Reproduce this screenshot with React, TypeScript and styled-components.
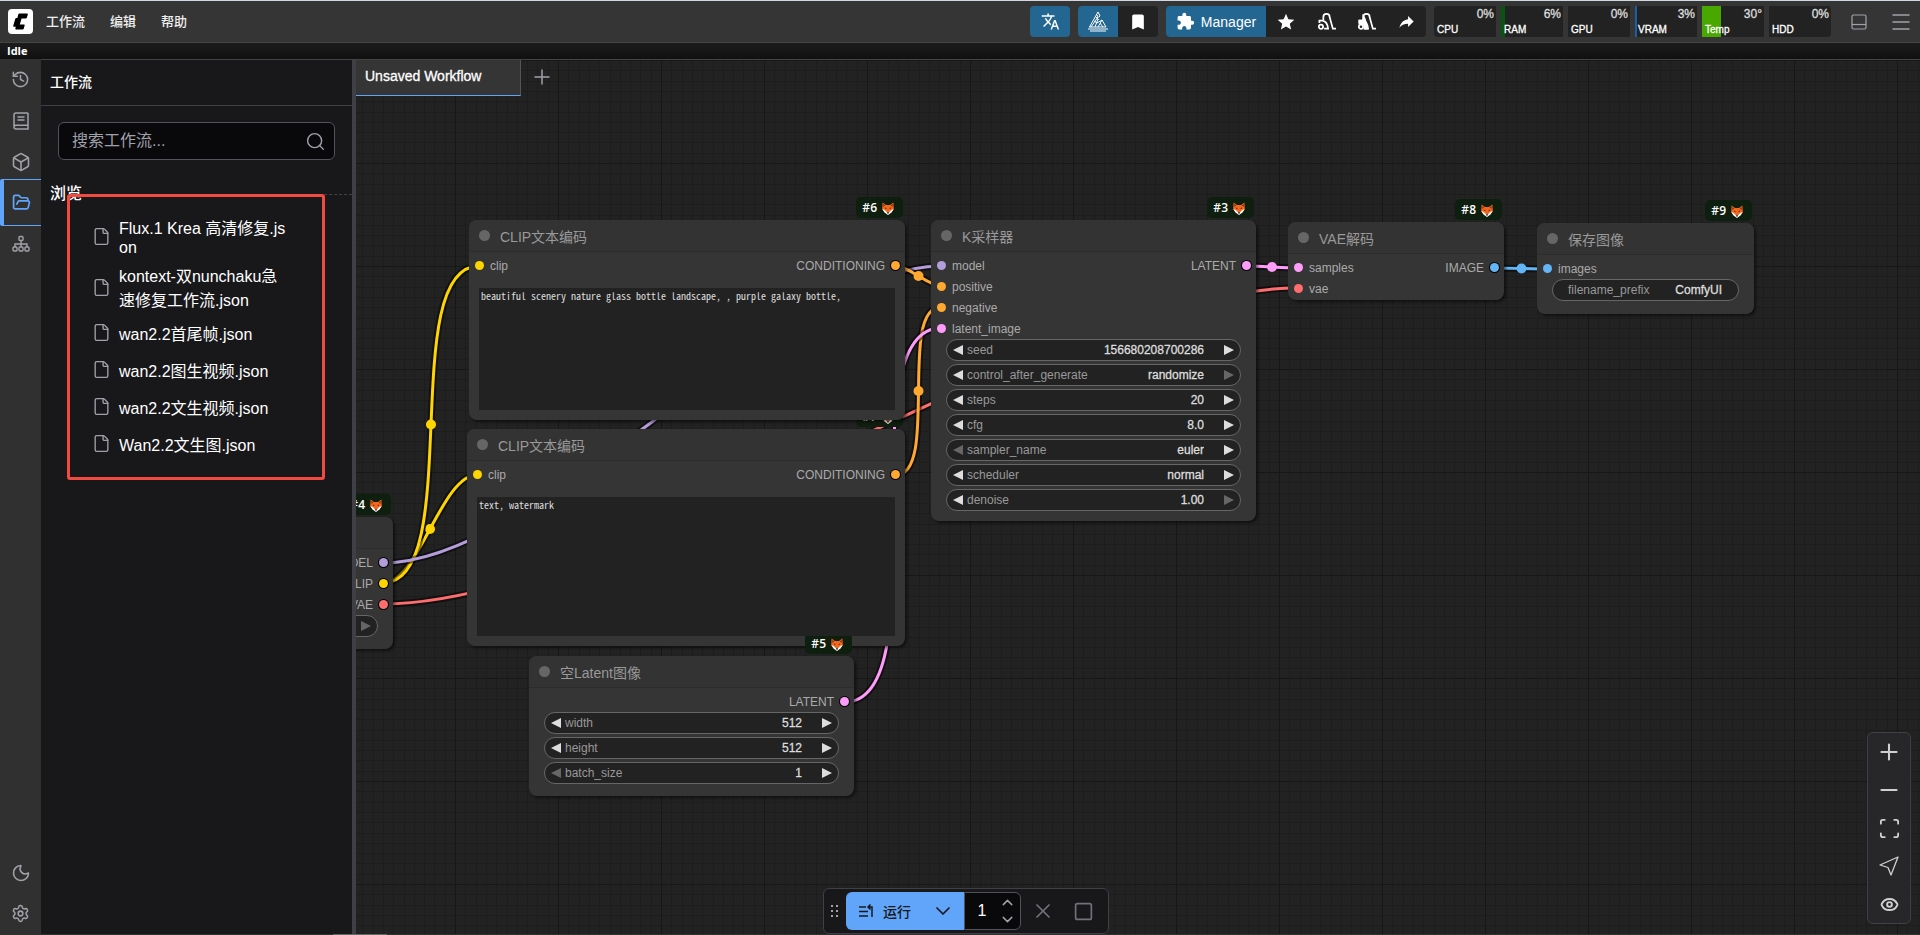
import React from "react";
import styled, { createGlobalStyle, css } from "styled-components";
import { Box, FolderOpen, Moon, Settings, History, Search, File, Plus, Minus, Eye, Scan, ChevronDown, ChevronUp, X, Square, Menu } from "lucide-react";
import { MdTranslate, MdBookmark, MdExtension, MdStar } from "react-icons/md";

const sans = `"Liberation Sans", "Noto Sans CJK SC", sans-serif`;

const GlobalStyle = createGlobalStyle`
  * { box-sizing: border-box; }
  body { margin: 0; background: #202020; color: #fff; font-family: ${sans}; overflow: hidden; }
  button, input, select, textarea { font: inherit; color: inherit; margin: 0; padding: 0; border: 0; background: none; outline: none; }
  svg { display: block; flex: none; }
`;

/* ---------- shell ---------- */

const Page = styled.div`
  display: flex;
  flex-direction: column;
  height: 100vh;
`;

const TopBar = styled.header`
  flex: none;
  display: flex;
  align-items: center;
  height: 43px;
  padding: 0 10px 0 8px;
  background: #353535;
  border-top: 1px solid #cfd8e3;
  border-bottom: 1px solid #444;
`;

const MenuBar = styled.nav`
  display: flex;
  gap: 25px;
  margin: 0 auto 0 13px;
`;

const MenuButton = styled.button`
  font-size: 13px;
  font-weight: 500;
  line-height: 20px;
  color: #eee;
`;

const StatusBar = styled.div`
  flex: none;
  height: 17px;
  padding-left: 7px;
  background: linear-gradient(#1c1c1c, #101010);
  border-bottom: 1px solid #444;
  font: bold 11px/16px "Open Sans", sans-serif;
`;

const Main = styled.div`
  flex: 1;
  display: flex;
  min-height: 0;
`;

const BottomLine = styled.div`
  flex: none;
  height: 1px;
  padding-left: 333px;
  background: #303030;
  &::after { content: ""; display: block; width: 54px; height: 1px; background: #666; }
`;

/* ---------- top bar tools ---------- */

const Tools = styled.div`
  display: flex;
  align-items: center;
  gap: 8px;
`;

const ToolGroup = styled.div`
  display: flex;
  height: 31px;
  border-radius: 4px;
  overflow: hidden;
  background: #222;
`;

const ToolButton = styled.button<{ $active?: boolean; $wide?: boolean }>`
  display: flex;
  align-items: center;
  justify-content: center;
  gap: 6px;
  width: ${(p) => (p.$wide ? 100 : 40)}px;
  background: ${(p) => (p.$active ? "#236692" : "transparent")};
  font-size: 14px;
`;

const Monitors = styled.div`
  display: flex;
  gap: 5px;
  border-radius: 4px;
  overflow: hidden;
`;

const Monitor = styled.div<{ $fill: string; $pct: number }>`
  display: flex;
  flex-direction: column;
  justify-content: space-between;
  width: 62px;
  height: 31px;
  padding: 2px 2px 1px 3px;
  background: linear-gradient(90deg, ${(p) => `${p.$fill} ${p.$pct}%, #222 ${p.$pct}%`});
  font-size: 12px;
  line-height: 13px;
  color: #ddd;
`;

const MonitorValue = styled.span`
  align-self: flex-end;
  -webkit-text-stroke: 0.3px;
`;

const MonitorName = styled.span`
  font-size: 10px;
  color: #fff;
  -webkit-text-stroke: 0.3px;
`;

const PlainButton = styled.button<{ $gap?: number }>`
  display: flex;
  align-items: center;
  justify-content: center;
  width: 18px;
  height: 18px;
  margin-left: ${(p) => p.$gap}px;
  color: #a1a1aa;
`;

/* ---------- icon rail ---------- */

const Rail = styled.nav`
  flex: none;
  display: flex;
  flex-direction: column;
  width: 41px;
  margin-top: -1px;
  background: #303030;
  color: #a1a1aa;
`;

const RailButton = styled.button<{ $active?: boolean; $push?: boolean }>`
  display: flex;
  align-items: center;
  justify-content: center;
  height: 41px;
  ${(p) => p.$push && css`margin-top: auto;`}
  ${(p) => p.$active && css`
    height: 47px;
    margin: -3px 0;
    padding-right: 3px;
    color: #60a5fa;
    border-top: 1px solid #60a5fa;
    border-bottom: 1px solid #60a5fa;
    border-left: 4px solid #60a5fa;
    border-top-left-radius: 2px;
    border-bottom-left-radius: 2px;
  `}
`;

/* ---------- workflow panel ---------- */

const Panel = styled.aside`
  position: relative;
  flex: none;
  display: flex;
  flex-direction: column;
  width: 315px;
  background: #18181b;
  border-right: 4px solid #3f3f46;
`;

const PanelHeader = styled.h2`
  margin: 0;
  height: 46px;
  padding-left: 9px;
  border-bottom: 1px solid #3f3f46;
  font-size: 14px;
  font-weight: 500;
  line-height: 44px;
`;

const SearchBox = styled.label`
  display: flex;
  align-items: center;
  height: 38px;
  margin: 16px 17px 0;
  padding: 0 8px 0 13px;
  border: 1px solid #52525b;
  border-radius: 6px;
  background: #09090b;
  color: #a1a1aa;
`;

const SearchInput = styled.input`
  flex: 1;
  min-width: 0;
  font-size: 16px;
  line-height: 24px;
  &::placeholder { color: #a1a1aa; opacity: 1; }
`;

const SectionTitle = styled.h3`
  display: flex;
  align-items: center;
  gap: 9px;
  margin: 22px 0 0;
  padding-left: 9px;
  font-size: 16px;
  font-weight: 500;
  line-height: 24px;
  &::after { content: ""; flex: 1; border-top: 1px dashed #3f3f46; }
`;

const FileList = styled.ul`
  display: flex;
  flex-direction: column;
  gap: 2px;
  margin: 0;
  padding: 7px 60px 0 51px;
  list-style: none;
`;

const FileRow = styled.li`
  display: flex;
  align-items: center;
  gap: 8px;
  min-height: 35px;
  padding: 2px 0;
  color: #a1a1aa;
`;

const FileName = styled.span`
  flex: 1;
  color: #fff;
  font-size: 16px;
  word-break: break-all;
`;

const Highlight = styled.div`
  position: absolute;
  top: 134px;
  left: 26px;
  width: 258px;
  height: 286px;
  border: 3px solid #f04a41;
  border-radius: 3px;
  pointer-events: none;
`;

/* ---------- canvas ---------- */

const Canvas = styled.main`
  position: relative;
  flex: 1;
  min-width: 0;
  overflow: hidden;
  background: #222;
`;

const PAN_X = 356;
const PAN_Y = 60;

const World = styled.div`
  position: absolute;
  left: -${PAN_X}px;
  top: -${PAN_Y}px;
`;

const Drawing = styled.svg`
  position: absolute;
  left: 0;
  top: 0;
  width: 100%;
  height: 100%;
`;

const Links = styled.svg`
  position: absolute;
  left: 0;
  top: 0;
  overflow: visible;
`;

const Tabs = styled.div`
  position: relative;
  display: flex;
  align-items: center;
  width: max-content;
`;

const Tab = styled.button`
  width: 165px;
  height: 36px;
  padding: 0 0 4px 9px;
  background: #353535;
  border-right: 1px solid #555;
  border-bottom: 1px solid #60a5fa;
  font-size: 14px;
  text-align: left;
  -webkit-text-stroke: 0.3px;
`;

const NewTab = styled.button`
  padding: 0 9px 2px;
  color: #a1a1aa;
`;

const NodeBox = styled.section<{ $x: number; $y: number; $w: number; $h: number }>`
  position: absolute;
  left: ${(p) => p.$x}px;
  top: ${(p) => p.$y}px;
  width: ${(p) => p.$w}px;
  height: ${(p) => p.$h}px;
  display: flex;
  flex-direction: column;
  background: #353535;
  border-radius: 8px;
  box-shadow: 2px 2px 3px rgba(0, 0, 0, 0.5);
  color: #aaa;
  font-size: 12px;
`;

const NodeTitle = styled.h4`
  flex: none;
  display: flex;
  align-items: center;
  gap: 10px;
  height: 32px;
  margin: 0;
  padding-left: 10px;
  border-bottom: 1px solid #2c2c2c;
  border-radius: 8px 8px 0 0;
  background: #333;
  color: #999;
  font-size: 14px;
  font-weight: 400;
  &::before { content: ""; width: 11px; height: 11px; border-radius: 50%; background: #666; }
`;

const Badge = styled.div`
  position: absolute;
  right: 2px;
  top: -23px;
  display: flex;
  align-items: center;
  gap: 5px;
  height: 21px;
  padding: 1px 9px 0 6px;
  border-radius: 5px;
  background: #0f1f0f;
  color: #fff;
  font: 600 12px/20px "Open Sans", sans-serif;
`;

const Slots = styled.div`
  flex: none;
  display: flex;
  justify-content: space-between;
  padding: 3px 5px 0 6px;
`;

const SlotColumn = styled.div`
  display: flex;
  flex-direction: column;
`;

const Slot = styled.div<{ $color: string; $out?: boolean }>`
  display: flex;
  flex-direction: ${(p) => (p.$out ? "row-reverse" : "row")};
  align-items: center;
  gap: 6px;
  height: 21px;
  &::before {
    content: "";
    width: 9px;
    height: 9px;
    border-radius: 50%;
    background: ${(p) => p.$color};
    box-shadow: ${(p) => (p.$out ? "0 0 0 1px #000" : "none")};
  }
`;

const Prompt = styled.textarea`
  position: relative;
  z-index: 1;
  flex: 1;
  margin: 12px 10px 10px;
  padding: 2px;
  resize: none;
  background: #222;
  color: #ddd;
  font: 10px/12px "Noto Sans Mono CJK SC", "Liberation Mono", monospace;
`;

const Widgets = styled.div`
  display: flex;
  flex-direction: column;
  gap: 3px;
  padding: 0 15px;
`;

const WidgetRow = styled.div<{ $text?: boolean }>`
  display: flex;
  align-items: center;
  height: 22px;
  padding: ${(p) => (p.$text ? "0 16px 0 15px" : "0 6px")};
  border: 1px solid #666;
  border-radius: 11px;
  background: #222;
  color: #999;
`;

const WidgetLabel = styled.label`
  flex: none;
  margin-left: 4px;
  ${WidgetRow} > &:first-child { margin-left: 0; }
`;

const valueStyle = css`
  flex: 1;
  min-width: 0;
  width: 0;
  color: #ddd;
  -webkit-text-stroke: 0.3px;
`;

const ValueInput = styled.input`
  ${valueStyle}
  text-align: right;
`;

const ValueSelect = styled.select`
  ${valueStyle}
  appearance: none;
  text-align-last: right;
`;

const Step = styled.button<{ $right?: boolean; $off?: boolean }>`
  width: 10px;
  height: 10px;
  margin-left: ${(p) => (p.$right ? 20 : 0)}px;
  background: ${(p) => (p.$off ? "#666" : "#ddd")};
  clip-path: ${(p) => (p.$right ? "polygon(0 0, 100% 50%, 0 100%)" : "polygon(100% 0, 0 50%, 100% 100%)")};
`;

/* ---------- floating bars ---------- */

const RunBar = styled.div`
  position: absolute;
  left: 467px;
  bottom: 0;
  display: flex;
  align-items: center;
  height: 46px;
  padding: 0 15px 0 7px;
  background: #18181b;
  border: 1px solid #3f3f46;
  border-radius: 6px;
  color: #71717a;
`;

const RunButton = styled.button`
  display: flex;
  align-items: center;
  gap: 9px;
  width: 79px;
  height: 38px;
  margin-left: 7px;
  padding-left: 12px;
  border-radius: 6px 0 0 6px;
  background: #60a5fa;
  color: #18181b;
  font-size: 14px;
  font-weight: 500;
`;

const RunMenu = styled.button`
  display: flex;
  align-items: center;
  justify-content: center;
  width: 39px;
  height: 38px;
  padding-right: 3px;
  background: #60a5fa;
  color: #18181b;
`;

const CountBox = styled.div`
  display: flex;
  width: 57px;
  height: 38px;
  border: 1px solid #52525b;
  border-radius: 0 6px 6px 0;
  background: #09090b;
`;

const CountInput = styled.input`
  width: 34px;
  font-size: 16px;
  text-align: center;
  color: #fff;
`;

const CountSteps = styled.div`
  display: flex;
  flex-direction: column;
  justify-content: space-evenly;
  color: #a1a1aa;
`;

const RunAction = styled.button`
  display: flex;
  justify-content: center;
  width: 20px;
  margin-left: 12px;
  & + & { margin-left: 20px; }
`;

const ZoomBar = styled.div`
  position: absolute;
  right: 9px;
  bottom: 10px;
  display: flex;
  flex-direction: column;
  width: 44px;
  background: #27272a;
  border: 1px solid #3f3f46;
  border-radius: 6px;
  color: #d0d0d0;
`;

const ZoomButton = styled.button`
  display: flex;
  align-items: center;
  justify-content: center;
  height: 38px;
`;

/* ---------- drawings ---------- */

const Logo = () => (
  <svg width="25" height="25" viewBox="0 0 25 25">
    <rect width="25" height="25" rx="4" fill="#fff" />
    <path d="M11.3 4.6H19.2Q20 4.6 19.8 5.4L18.8 8.8Q18.6 9.6 17.8 9.6H13.6L11.8 15.4H16Q17 15.4 16.7 16.3L15.7 19.8Q15.4 20.6 14.6 20.6H8Q7.2 20.6 7.3 19.8L7.8 17.8H5.8Q5 17.8 5.2 17L7.3 9.8Q7.5 9.1 8.3 9.1H9.3L10.3 5.4Q10.5 4.6 11.3 4.6Z" fill="#000" />
  </svg>
);

const Sail = () => (
  <svg width="20" height="21" viewBox="0 0 20 21" fill="none" stroke="#fff" strokeWidth="1">
    <path d="M10 1 1.5 16M10 1l2 4-1.5 1.5M9 4l1 2-7 10M10 8l-3 8M6 10l3 2 5-3 4 7H1M14 9l-4 7M8 6l3 3M12 12l3 4M0 18h20M2 20h16" />
  </svg>
);

const Vacuum = ({ solid }: { solid?: boolean }) => (
  <svg width="19" height="19" viewBox="0 0 24 24" fill="none" stroke="#fff" strokeWidth="2.2">
    <path d="M8 10V6.500a4 4 0 0 1 8 0l4 14.500h4" />
    <path d="M3 14v-3h4q6 1 7 10H9" />
    {solid && <path d="M8 5.500q3 4 4.500 15.500H9.500Q11 14 3 14.500V11h5z" fill="#fff" />}
    <circle cx="5" cy="18.500" r="2.700" />
  </svg>
);

const Share = () => (
  <svg width="19" height="19" viewBox="0 0 24 24" fill="#fff">
    <path d="M21 12l-7-7v4C7 10 4 15 3 20c2.500-3.500 6-5.100 11-5.100V19z" />
  </svg>
);

const PanelIcon = () => (
  <svg width="16" height="16" viewBox="0 0 16 16" fill="none" stroke="currentColor" strokeWidth="1.200">
    <rect x="1" y="1" width="14" height="14" rx="1.500" />
    <path d="M1 10.500h14" />
  </svg>
);

const BookIcon = () => (
  <svg width="18" height="18" viewBox="0 0 18 18" fill="none" stroke="currentColor" strokeWidth="1.500">
    <path d="M16 1H4Q2 1 2 3V15Q2 17 4 17H16V1M2.500 14Q3 13.200 4 13.200H16M5.500 5h7M5.500 8h7" />
  </svg>
);

const TreeIcon = () => (
  <svg width="18" height="18" viewBox="0 0 18 18" fill="none" stroke="currentColor" strokeWidth="1.400">
    <rect x="7" y="1.500" width="4" height="4" rx="1" />
    <rect x="1" y="12" width="4" height="4" rx="1" />
    <rect x="7" y="12" width="4" height="4" rx="1" />
    <rect x="13" y="12" width="4" height="4" rx="1" />
    <path d="M9 5.500V12M3 12V9h12v3" />
  </svg>
);

const Fox = () => (
  <svg width="12" height="13" viewBox="0 0 12 13">
    <path d="M.6.6 4 3h4L11.400.6 11.800 7 9 10.500H3L.2 7Z" fill="#f4661b" />
    <path d="M1.300 1.900 3 3.300 1.500 5Z M10.700 1.900 9 3.300 10.500 5Z" fill="#5b2c14" />
    <path d="M.2 7 2.800 8 6 11.400 9.200 8 11.800 7 9.500 10.600 6 12.900 2.500 10.600Z" fill="#fff" />
    <path d="M3 5.300 4.800 6.900 3.300 6.800ZM9 5.300 7.200 6.900 8.700 6.800ZM5 10.700h2L6 12Z" fill="#222" />
  </svg>
);

const Handle = () => (
  <svg width="8" height="14" viewBox="0 0 8 14" fill="#a1a1aa">
    {[1, 6, 11].map((y) => [0, 5].map((x) => <rect key={`${x}-${y}`} x={x} y={y} width="2" height="2" />))}
  </svg>
);

const QueueIcon = () => (
  <svg width="16" height="14" viewBox="0 0 16 14" fill="none" stroke="currentColor" strokeWidth="1.500">
    <path d="M1 3h7M1 7.500h9M1 12h9M14 13V3H10M12.500.5 10 3l2.500 2.500" />
  </svg>
);

const SendIcon = () => (
  <svg width="20" height="20" viewBox="0 0 20 20" fill="none" stroke="currentColor" strokeWidth="1.300" strokeLinejoin="round">
    <path d="M19 1 1 9l8 2.500L12 19Z" />
  </svg>
);

/* ---------- data ---------- */

const YELLOW = "#FFD500", PURPLE = "#B39DDB", RED = "#FF6E6E", ORANGE = "#FFA931", PINK = "#FF9CF9", BLUE = "#64B5F6";

type Port = [label: string, color: string];
type Widget = { name: string; value?: string; kind: "number" | "combo" | "text"; noLeft?: boolean; noRight?: boolean };
type GraphNode = {
  id: number; x: number; y: number; w: number; h: number; title?: string;
  inputs?: Port[]; outputs?: Port[]; widgets?: Widget[]; prompt?: string;
};

const nodes: GraphNode[] = [
  { id: 4, x: 68, y: 517, w: 325, h: 132, outputs: [["MODEL", PURPLE], ["CLIP", YELLOW], ["VAE", RED]], widgets: [{ name: "", kind: "combo", noRight: true }] },
  {
    id: 3, x: 931, y: 220, w: 325, h: 301, title: "K采样器",
    inputs: [["model", PURPLE], ["positive", ORANGE], ["negative", ORANGE], ["latent_image", PINK]],
    outputs: [["LATENT", PINK]],
    widgets: [
      { name: "seed", value: "156680208700286", kind: "number" },
      { name: "control_after_generate", value: "randomize", kind: "combo", noRight: true },
      { name: "steps", value: "20", kind: "number" },
      { name: "cfg", value: "8.0", kind: "number" },
      { name: "sampler_name", value: "euler", kind: "combo", noLeft: true },
      { name: "scheduler", value: "normal", kind: "combo" },
      { name: "denoise", value: "1.00", kind: "number", noRight: true },
    ],
  },
  { id: 8, x: 1288, y: 222, w: 216, h: 78, title: "VAE解码", inputs: [["samples", PINK], ["vae", RED]], outputs: [["IMAGE", BLUE]] },
  { id: 9, x: 1537, y: 223, w: 217, h: 91, title: "保存图像", inputs: [["images", BLUE]], widgets: [{ name: "filename_prefix", value: "ComfyUI", kind: "text" }] },
  { id: 7, x: 467, y: 429, w: 438, h: 217, title: "CLIP文本编码", inputs: [["clip", YELLOW]], outputs: [["CONDITIONING", ORANGE]], prompt: "text, watermark" },
  {
    id: 6, x: 469, y: 220, w: 436, h: 200, title: "CLIP文本编码", inputs: [["clip", YELLOW]], outputs: [["CONDITIONING", ORANGE]],
    prompt: "beautiful scenery nature glass bottle landscape, , purple galaxy bottle,",
  },
  {
    id: 5, x: 529, y: 656, w: 325, h: 140, title: "空Latent图像", outputs: [["LATENT", PINK]],
    widgets: [
      { name: "width", value: "512", kind: "number" },
      { name: "height", value: "512", kind: "number" },
      { name: "batch_size", value: "1", kind: "number", noLeft: true },
    ],
  },
];

const links: [number, number, number, number, string][] = [
  [383, 583, 477, 475, YELLOW],
  [383, 583, 479, 266, YELLOW],
  [383, 563, 941, 266, PURPLE],
  [383, 604, 1298, 288, RED],
  [896, 266, 941, 286, ORANGE],
  [896, 475, 941, 307, ORANGE],
  [845, 702, 941, 328, PINK],
  [1246, 266, 1298, 268, PINK],
  [1495, 268, 1548, 269, BLUE],
];

const files = [
  "Flux.1 Krea 高清修复.json",
  "kontext-双nunchaku急速修复工作流.json",
  "wan2.2首尾帧.json",
  "wan2.2图生视频.json",
  "wan2.2文生视频.json",
  "Wan2.2文生图.json",
];

const monitors: [string, string, number, string][] = [
  ["CPU", "0%", 0, "#222"],
  ["RAM", "6%", 6, "#07560f"],
  ["GPU", "0%", 0, "#222"],
  ["VRAM", "3%", 3, "#1a5fa5"],
  ["Temp", "30°", 30, "#49a800"],
  ["HDD", "0%", 0, "#222"],
];

const gridSteps = [10, 21, 31, 41, 52, 62, 72, 82, 93];

/* ---------- parts ---------- */

const Grid = () => (
  <Drawing>
    <defs>
      <pattern id="grid" x={558 - PAN_X} y={369 - PAN_Y} width="103" height="103" patternUnits="userSpaceOnUse">
        {gridSteps.map((s) => (
          <path key={s} d={`M${s} 0h1v103h-1zM0 ${s}h103v1H0z`} fill="#1d1d1d" />
        ))}
        <path d="M0 0h103v1H0zM0 0h1v103H0z" fill="#171717" />
      </pattern>
    </defs>
    <rect width="100%" height="100%" fill="url(#grid)" />
  </Drawing>
);

const LinkLines = () => (
  <Links width="1" height="1" fill="none">
    {links.map(([x1, y1, x2, y2, color], i) => {
      const reach = Math.hypot(x2 - x1, y2 - y1) / 4;
      const d = `M${x1} ${y1}C${x1 + reach} ${y1} ${x2 - reach} ${y2} ${x2} ${y2}`;
      return (
        <g key={i}>
          <path d={d} stroke="#000" strokeOpacity="0.5" strokeWidth="7" />
          <path d={d} stroke={color} strokeWidth="3" />
          <circle cx={(x1 + x2) / 2} cy={(y1 + y2) / 2} r="5" fill={color} />
        </g>
      );
    })}
  </Links>
);

const NodeWidget = ({ nodeId, widget }: { nodeId: number; widget: Widget }) => {
  const id = `n${nodeId}-${widget.name}`;
  const text = widget.kind === "text";
  return (
    <WidgetRow $text={text}>
      {!text && <Step $off={widget.noLeft} aria-label="previous" />}
      <WidgetLabel htmlFor={id}>{widget.name}</WidgetLabel>
      {widget.kind === "combo" ? (
        <ValueSelect id={id} defaultValue={widget.value}>
          {widget.value && <option>{widget.value}</option>}
        </ValueSelect>
      ) : (
        <ValueInput id={id} defaultValue={widget.value} />
      )}
      {!text && <Step $right $off={widget.noRight} aria-label="next" />}
    </WidgetRow>
  );
};

const NodeView = ({ node }: { node: GraphNode }) => (
  <NodeBox $x={node.x} $y={node.y} $w={node.w} $h={node.h}>
    <Badge>#{node.id} <Fox /></Badge>
    <NodeTitle>{node.title}</NodeTitle>
    <Slots>
      <SlotColumn>
        {node.inputs?.map(([label, color]) => <Slot key={label} $color={color}>{label}</Slot>)}
      </SlotColumn>
      <SlotColumn>
        {node.outputs?.map(([label, color]) => <Slot key={label} $color={color} $out>{label}</Slot>)}
      </SlotColumn>
    </Slots>
    {node.prompt && <Prompt aria-label="prompt" spellCheck={false} defaultValue={node.prompt} />}
    {node.widgets && (
      <Widgets>
        {node.widgets.map((w) => <NodeWidget key={w.name} nodeId={node.id} widget={w} />)}
      </Widgets>
    )}
  </NodeBox>
);

export default function App() {
  return (
    <Page>
      <GlobalStyle />
      <TopBar>
        <Logo />
        <MenuBar>
          {["工作流", "编辑", "帮助"].map((m) => <MenuButton key={m}>{m}</MenuButton>)}
        </MenuBar>
        <Tools>
          <ToolGroup>
            <ToolButton $active aria-label="translate"><MdTranslate size={19} /></ToolButton>
          </ToolGroup>
          <ToolGroup>
            <ToolButton $active aria-label="monitor"><Sail /></ToolButton>
            <ToolButton aria-label="bookmark"><MdBookmark size={20} /></ToolButton>
          </ToolGroup>
          <ToolGroup>
            <ToolButton $active $wide><MdExtension size={19} />Manager</ToolButton>
            <ToolButton aria-label="favourite"><MdStar size={20} /></ToolButton>
            <ToolButton aria-label="unload models"><Vacuum /></ToolButton>
            <ToolButton aria-label="free cache"><Vacuum solid /></ToolButton>
            <ToolButton aria-label="share"><Share /></ToolButton>
          </ToolGroup>
          <Monitors>
            {monitors.map(([name, value, pct, fill]) => (
              <Monitor key={name} $pct={pct} $fill={fill}>
                <MonitorValue>{value}</MonitorValue>
                <MonitorName>{name}</MonitorName>
              </Monitor>
            ))}
          </Monitors>
        </Tools>
        <PlainButton $gap={19} aria-label="bottom panel"><PanelIcon /></PlainButton>
        <PlainButton $gap={24} aria-label="menu"><Menu size={24} strokeWidth={1.5} /></PlainButton>
      </TopBar>
      <StatusBar>Idle</StatusBar>
      <Main>
        <Rail>
          <RailButton aria-label="history"><History size={19} strokeWidth={1.9} /></RailButton>
          <RailButton aria-label="nodes"><BookIcon /></RailButton>
          <RailButton aria-label="models"><Box size={20} strokeWidth={1.9} /></RailButton>
          <RailButton $active aria-label="workflows"><FolderOpen size={19} strokeWidth={2.2} /></RailButton>
          <RailButton aria-label="tree"><TreeIcon /></RailButton>
          <RailButton $push aria-label="theme"><Moon size={20} strokeWidth={1.9} /></RailButton>
          <RailButton aria-label="settings"><Settings size={19} strokeWidth={1.9} /></RailButton>
        </Rail>
        <Panel>
          <PanelHeader>工作流</PanelHeader>
          <SearchBox>
            <SearchInput placeholder="搜索工作流..." aria-label="搜索工作流" />
            <Search size={21} strokeWidth={1.6} />
          </SearchBox>
          <SectionTitle>浏览</SectionTitle>
          <FileList>
            {files.map((f) => (
              <FileRow key={f}>
                <File size={19} strokeWidth={1.7} />
                <FileName>{f}</FileName>
              </FileRow>
            ))}
          </FileList>
          <Highlight />
        </Panel>
        <Canvas>
          <Grid />
          <World>
            <LinkLines />
            {nodes.map((n) => <NodeView key={n.id} node={n} />)}
          </World>
          <Tabs>
            <Tab>Unsaved Workflow</Tab>
            <NewTab aria-label="new workflow"><Plus size={24} strokeWidth={1.5} /></NewTab>
          </Tabs>
          <RunBar>
            <Handle />
            <RunButton><QueueIcon />运行</RunButton>
            <RunMenu aria-label="run options"><ChevronDown size={24} strokeWidth={1.7} /></RunMenu>
            <CountBox>
              <CountInput aria-label="batch count" defaultValue="1" />
              <CountSteps>
                <button aria-label="more"><ChevronUp size={17} /></button>
                <button aria-label="less"><ChevronDown size={17} /></button>
              </CountSteps>
            </CountBox>
            <RunAction aria-label="cancel"><X size={24} strokeWidth={1.7} /></RunAction>
            <RunAction aria-label="stop"><Square size={21} strokeWidth={1.9} /></RunAction>
          </RunBar>
          <ZoomBar>
            <ZoomButton aria-label="zoom in"><Plus size={26} strokeWidth={1.9} /></ZoomButton>
            <ZoomButton aria-label="zoom out"><Minus size={26} strokeWidth={1.9} /></ZoomButton>
            <ZoomButton aria-label="fit view"><Scan size={23} strokeWidth={1.9} /></ZoomButton>
            <ZoomButton aria-label="select mode"><SendIcon /></ZoomButton>
            <ZoomButton aria-label="toggle links"><Eye size={19} strokeWidth={2.4} /></ZoomButton>
          </ZoomBar>
        </Canvas>
      </Main>
      <BottomLine />
    </Page>
  );
}
